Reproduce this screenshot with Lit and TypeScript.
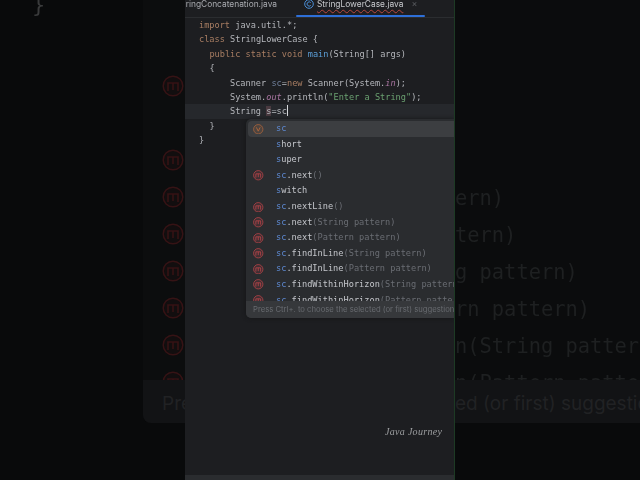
import { LitElement, html, css } from "lit";
import { customElement } from "lit/decorators.js";

const mIcon = () => html`<svg class="ic" viewBox="0 0 22 22" aria-hidden="true">
  <circle cx="11" cy="11" r="9.8" fill="currentColor" fill-opacity=".14" stroke="currentColor" stroke-width="1.5"/>
  <path d="M6 16V8h10v8M11 8v7" fill="none" stroke="currentColor" stroke-width="1.6"/>
</svg>`;

const completions: [string, string, string, string][] = [
  ["v", "sc", "", ""],
  ["", "s", "hort", ""],
  ["", "s", "uper", ""],
  ["m", "sc", ".next", "()"],
  ["", "s", "witch", ""],
  ["m", "sc", ".nextLine", "()"],
  ["m", "sc", ".next", "(String pattern)"],
  ["m", "sc", ".next", "(Pattern pattern)"],
  ["m", "sc", ".findInLine", "(String pattern)"],
  ["m", "sc", ".findInLine", "(Pattern pattern)"],
  ["m", "sc", ".findWithinHorizon", "(String pattern)"],
  ["m", "sc", ".findWithinHorizon", "(Pattern pattern)"],
];

const leftRows = [true, false, true, true, true, true, true, true, true];
const rightRows = ["ern)", "tern)", "g pattern)", "rn pattern)", "n(String pattern)", "n(Pattern pattern)"];

@customElement("app-root")
export class AppRoot extends LitElement {
  static styles = css`
    :host { display: block; width: 640px; height: 480px; overflow: hidden; background: #0a0b0c; }
    .stage { display: grid; grid-template-columns: 185px 270px 185px; width: 640px; height: 480px; }

    .side { position: relative; overflow: hidden; height: 480px; background: #090a0b; }
    .brace { position: absolute; left: 32px; top: -9px; font: 22px/28px "DejaVu Sans Mono", monospace; color: #3a3b3c; filter: blur(.5px); }
    .leftpanel { margin-left: 143px; height: 423px; background: #0c0d0e; border-radius: 0 0 0 8px; overflow: hidden; display: flex; flex-direction: column; }
    .rows { height: 380px; flex: none; padding-top: 67.5px; box-sizing: border-box; overflow: hidden; }
    .lrow { height: 37px; display: flex; align-items: center; padding-left: 19px; color: #361315; filter: blur(.4px); }
    .ic { width: 22px; height: 22px; display: block; flex: none; }
    .lfoot { flex: 1; background: #121315; font: 19px/48px Inter, sans-serif; color: #212224; padding-left: 19px; white-space: nowrap; }

    .rightpanel { height: 423px; background: #0b0c0d; overflow: hidden; display: flex; flex-direction: column; }
    .rrows { height: 380px; flex: none; padding-top: 179.5px; box-sizing: border-box; overflow: hidden; }
    .rtxt { height: 37px; font: 20.4px/37px "DejaVu Sans Mono", monospace; color: #1e2021; white-space: nowrap; filter: blur(.4px); }
    .rfoot { flex: 1; background: #121315; font: 19px/48px Inter, sans-serif; color: #212224; white-space: nowrap; }

    .center { position: relative; overflow: hidden; background: #1d1e21; height: 480px; display: flex; flex-direction: column; border-right: 1px solid #1d3a24; box-sizing: border-box; filter: blur(.3px); }
    .tabs { height: 18px; flex: none; position: relative; border-bottom: 1px solid #2b2d30; box-sizing: border-box; display: flex; align-items: center; font: 8.4px/10px Inter, sans-serif; color: #a9abb0; padding-bottom: 9px; white-space: nowrap; }
    .tab1 { width: 92px; flex: none; overflow: hidden; display: flex; justify-content: flex-end; }
    .tab1 span { flex: none; }
    .tab2 { display: flex; align-items: center; gap: 3px; margin-left: 27px; color: #c8cace; }
    .tab2 svg { width: 10px; height: 10px; }
    .tab2 u { text-decoration: underline wavy #b8473f 0.6px; text-underline-offset: 2px; }
    .close { margin-left: 8px; color: #5a5c60; font-size: 9px; }
    .tabbar { position: absolute; left: 111px; width: 129px; bottom: 0; height: 2.5px; background: #2e6fd8; border-radius: 2px; }

    .code { font: 8.6px/14.4px "DejaVu Sans Mono", monospace; color: #b4b6bb; }
    .line { height: 14.4px; padding-left: 14px; white-space: pre; }
    .i1 { padding-left: 24.4px; }
    .i2 { padding-left: 45px; }
    .cur { background: #26282c; }
    .k { color: #a97e63; }
    .f { color: #5b9fd8; }
    .st { color: #a875a0; font-style: italic; }
    .str { color: #6aa070; }
    .v { color: #6f7f9a; }
    .hl { background: #4a3a40; }
    .caret { display: inline-block; width: 1px; height: 11px; background: #d8d9dc; vertical-align: -2px; }

    .popup { position: absolute; left: 61px; top: 119px; right: 0; height: 199px; background: #2a2c2f; border-radius: 5px 0 0 5px; box-shadow: 0 0 4px #141517; overflow: hidden; display: flex; flex-direction: column; font: 8.65px/15.6px "DejaVu Sans Mono", monospace; color: #c4c6cb; white-space: nowrap; }
    .list { padding: 2px 0 0 2px; height: 182px; box-sizing: border-box; overflow: hidden; flex: none; }
    .row { height: 15.6px; display: flex; align-items: center; border-radius: 4px 0 0 4px; }
    .row.sel { background: #3c3e41; }
    .slot { width: 28px; flex: none; padding-left: 5px; box-sizing: border-box; }
    .slot .ic { width: 10.5px; height: 10.5px; color: #c4474c; }
    .slot .ic.o { color: #b5683c; }
    .m { color: #5d88d0; }
    .p { color: #6a6d73; }
    .foot { flex: 1; background: #36383b; font: 7.7px/17px Inter, sans-serif; color: #686b70; padding-left: 7px; }
    .wm { position: absolute; left: 200px; top: 426px; font: italic 10px/12px "Liberation Serif", serif; letter-spacing: 0.3px; color: #9c9ea0; }
    .bottom { position: absolute; left: 0; right: 0; bottom: 0; height: 5px; background: #2a2c2f; }
  `;

  render() {
    return html`<div class="stage">
      <div class="side">
        <div class="brace">}</div>
        <div class="leftpanel">
          <div class="rows">${leftRows.map((on) => html`<div class="lrow">${on ? mIcon() : ""}</div>`)}</div>
          <div class="lfoot">Press Ctrl+.</div>
        </div>
      </div>

      <div class="center">
        <div class="tabs">
          <div class="tab1"><span>ringConcatenation.java</span></div>
          <div class="tab2">
            <svg viewBox="0 0 10 10" aria-hidden="true"><circle cx="5" cy="5" r="4.3" fill="none" stroke="#4a8fd8"/><path d="M6.7 3.6A2.1 2.1 0 1 0 6.7 6.4" fill="none" stroke="#4a8fd8"/></svg>
            <u>StringLowerCase.java</u>
          </div>
          <span class="close">×</span>
          <div class="tabbar"></div>
        </div>
        <div class="code">
          <div class="line"><span class="k">import</span> java.util.*;</div>
          <div class="line"><span class="k">class</span> StringLowerCase {</div>
          <div class="line i1"><span class="k">public static void</span> <span class="f">main</span>(String[] args)</div>
          <div class="line i1">{</div>
          <div class="line i2">Scanner <span class="v">sc</span>=<span class="k">new</span> Scanner(System.<span class="st">in</span>);</div>
          <div class="line i2">System.<span class="st">out</span>.println(<span class="str">"Enter a String"</span>);</div>
          <div class="line i2 cur">String <span class="hl">s</span>=sc<span class="caret"></span></div>
          <div class="line i1">}</div>
          <div class="line">}</div>
        </div>
        <div class="popup">
          <div class="list">
            ${completions.map(([kind, match, rest, params], i) => html`<div class="row ${i === 0 ? "sel" : ""}">
              <div class="slot">${kind === "m" ? mIcon() : kind === "v" ? html`<svg class="ic o" viewBox="0 0 22 22" aria-hidden="true"><circle cx="11" cy="11" r="9.8" fill="currentColor" fill-opacity=".14" stroke="currentColor" stroke-width="1.5"/><path d="M7 7l4 8 4-8" fill="none" stroke="currentColor" stroke-width="1.8"/></svg>` : ""}</div>
              <span><span class="m">${match}</span>${rest}<span class="p">${params}</span></span>
            </div>`)}
          </div>
          <div class="foot">Press Ctrl+. to choose the selected (or first) suggestion</div>
        </div>
        <div class="wm">Java Journey</div>
        <div class="bottom"></div>
      </div>

      <div class="side">
        <div class="rightpanel">
          <div class="rrows">${rightRows.map((t) => html`<div class="rtxt">${t}</div>`)}</div>
          <div class="rfoot">ed (or first) suggestion</div>
        </div>
      </div>
    </div>`;
  }
}
